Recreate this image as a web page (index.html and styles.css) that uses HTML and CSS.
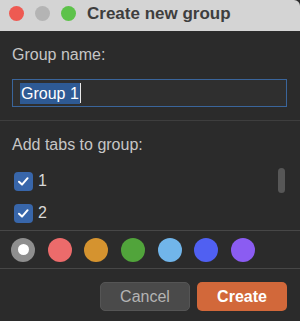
FILE: index.html
```html
<!DOCTYPE html>
<html lang="en">
<head>
    <meta charset="UTF-8">
    <meta name="viewport" content="width=device-width, initial-scale=1.0">
    <title>Create new group</title>
    <link rel="stylesheet" href="styles.css">
</head>
<body>
    <div class="window">
        <div class="titlebar">
            <span class="light red"></span>
            <span class="light gray"></span>
            <span class="light green"></span>
            <span class="title">Create new group</span>
        </div>

        <div class="section">
            <div class="label">Group name:</div>
            <div class="name-input"><span class="selected">Group 1</span><span class="caret"></span></div>
        </div>

        <div class="section tabs">
            <div class="label">Add tabs to group:</div>
            <div class="tab-list">
                <label class="tab-row"><span class="check"><svg viewBox="0 0 19 19" width="19" height="19"><path d="M5 9.8 L8 12.6 L13.6 6.2" fill="none" stroke="#fff" stroke-width="2" stroke-linecap="round" stroke-linejoin="round"/></svg></span>1</label>
                <label class="tab-row"><span class="check"><svg viewBox="0 0 19 19" width="19" height="19"><path d="M5 9.8 L8 12.6 L13.6 6.2" fill="none" stroke="#fff" stroke-width="2" stroke-linecap="round" stroke-linejoin="round"/></svg></span>2</label>
                <div class="scroll-thumb"></div>
            </div>
        </div>

        <div class="colors">
            <span class="swatch none"></span>
            <span class="swatch" style="background: #ec6b6b"></span>
            <span class="swatch" style="background: #d5932f"></span>
            <span class="swatch" style="background: #51a43b"></span>
            <span class="swatch" style="background: #71b5ea"></span>
            <span class="swatch" style="background: #5060f2"></span>
            <span class="swatch" style="background: #8b5cf2"></span>
        </div>

        <div class="actions">
            <button class="btn cancel">Cancel</button>
            <button class="btn create">Create</button>
        </div>
    </div>
</body>
</html>
```

FILE: styles.css
```css
body {
    margin: 0;
    background: #2b2b2b;
    font-family: 'Liberation Sans', Arial, sans-serif;
}

.window {
    width: 300px;
    height: 321px;
    background: #2b2b2b;
    overflow: hidden;
}

.titlebar {
    height: 31px;
    box-sizing: border-box;
    padding: 0 0 4px 9px;
    display: flex;
    align-items: center;
    gap: 11px;
    background: #d4d4d4;
    border-top-right-radius: 6px;
}

.light {
    width: 15px;
    height: 15px;
    border-radius: 50%;
}

.red { background: #ee5a52; }
.gray { background: #b4b4b4; }
.green { background: #5dc24a; }

.title {
    font-size: 17px;
    font-weight: bold;
    color: #3e3e3e;
}

.section {
    padding: 14px 13px 0 12px;
    border-bottom: 1px solid #3e3e3e;
}

.label {
    font-size: 16px;
    line-height: 20px;
    color: #c6c6c6;
}

.name-input {
    margin: 14px 0 13px;
    height: 28px;
    box-sizing: border-box;
    border: 1px solid #3a659b;
    background: #2f2f2f;
    padding-left: 7px;
    display: flex;
    align-items: center;
}

.selected {
    background: #2e5a94;
    color: #fff;
    font-size: 16px;
    line-height: 21px;
    padding: 0 1px;
}

.caret {
    width: 1px;
    height: 20px;
    background: #e8e8e8;
}

.tabs {
    padding-right: 0;
    border-bottom-color: #474747;
}

.tab-list {
    position: relative;
    height: 75px;
    padding-top: 10px;
    box-sizing: border-box;
}

.tab-row {
    height: 32px;
    display: flex;
    align-items: center;
    gap: 5px;
    padding-left: 2px;
    font-size: 16px;
    color: #d8d8d8;
}

.check {
    width: 19px;
    height: 19px;
    border-radius: 4px;
    background: #3866aa;
    display: flex;
}

.scroll-thumb {
    position: absolute;
    top: 13px;
    right: 15px;
    width: 7px;
    height: 25px;
    border-radius: 4px;
    background: #575757;
}

.colors {
    height: 37px;
    display: flex;
    align-items: center;
    gap: 12.7px;
    padding-left: 11px;
    border-bottom: 1px solid #474747;
}

.swatch {
    width: 24px;
    height: 24px;
    border-radius: 50%;
}

.swatch.none {
    background: #8e8e8e;
    display: flex;
    align-items: center;
    justify-content: center;
}

.swatch.none::after {
    content: '';
    width: 11px;
    height: 11px;
    border-radius: 50%;
    background: #fff;
}

.actions {
    display: flex;
    justify-content: flex-end;
    gap: 7px;
    padding: 13px 13px 0 0;
}

.btn {
    width: 90px;
    height: 29px;
    border-radius: 5px;
    font-family: 'Liberation Sans', Arial, sans-serif;
    font-size: 16px;
}

.cancel {
    background: #4a4a4a;
    border: 1px solid #555;
    color: #b4b4b4;
}

.create {
    background: #d2683a;
    border: none;
    color: #fff;
    font-weight: bold;
}
```
